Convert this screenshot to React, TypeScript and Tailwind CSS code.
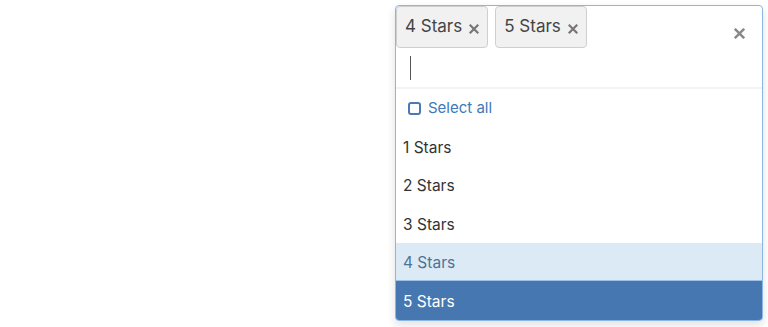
import { useState } from "react"

const options = ["1 Stars", "2 Stars", "3 Stars", "4 Stars", "5 Stars"]

const Cross = ({ size = 10 }: { size?: number }) => (
    <svg width={size} height={size} viewBox="0 0 10 10" className="block">
        <path d="M1.5 1.5 L8.5 8.5 M8.5 1.5 L1.5 8.5" stroke="currentColor" strokeWidth="2.2" strokeLinecap="square" />
    </svg>
)

const App = () => {
    const [selected] = useState<string[]>(["4 Stars", "5 Stars"])
    const hovered = "5 Stars"

    return (
        <div className="min-h-[327px] w-[768px] bg-white pl-[395px] pt-[5px] font-['Inter',sans-serif] text-[#333]">
            <div className="w-[368px] rounded-[4px] border border-[#8db5e3] bg-white shadow-[0_4px_10px_rgba(0,0,0,0.12)]">
                {/* control */}
                <div className="flex items-start">
                    <div className="flex flex-1 flex-wrap gap-x-[7px]">
                        {selected.map((item) => (
                            <div
                                key={item}
                                className="flex h-[42px] items-center gap-[7px] rounded-[4px] border border-[#cfcfcf] bg-[#f1f1f1] pl-[8px] pr-[8px] text-[17px] text-[#444]"
                            >
                                <span>{item}</span>
                                <span className="mt-[4px] text-[#777]"><Cross size={10} /></span>
                            </div>
                        ))}
                        <div className="flex h-[39px] w-full items-center pl-[14px]">
                            <div className="h-[24px] w-px bg-[#555]" />
                        </div>
                    </div>
                    <div className="mr-[17px] mt-[22px] text-[#888]"><Cross size={11} /></div>
                </div>

                {/* menu */}
                <div className="border-t-2 border-[#f3f3f3]">
                    <div className="flex h-[38px] items-center gap-[7px] pl-[12px] pt-[1px] text-[15px] text-[#4178b8]">
                        <span className="h-[13px] w-[13px] rounded-[3px] border-2 border-[#4a7ab5]" />
                        <span>Select all</span>
                    </div>
                    {options.map((item) => {
                        const isHovered = item === hovered
                        const isSelected = selected.includes(item) && !isHovered
                        return (
                            <div
                                key={item}
                                className={`flex h-[38.6px] items-center pl-[7px] pt-[2px] text-[15.5px] ${
                                    isHovered
                                        ? "rounded-b-[3px] bg-[#4677b1] text-white"
                                        : isSelected
                                        ? "border-b border-[#9dc0e6] bg-[#dceaf6] text-[#4d7395]"
                                        : "text-[#333]"
                                }`}
                            >
                                {item}
                            </div>
                        )
                    })}
                </div>
            </div>
        </div>
    )
}

export default App
